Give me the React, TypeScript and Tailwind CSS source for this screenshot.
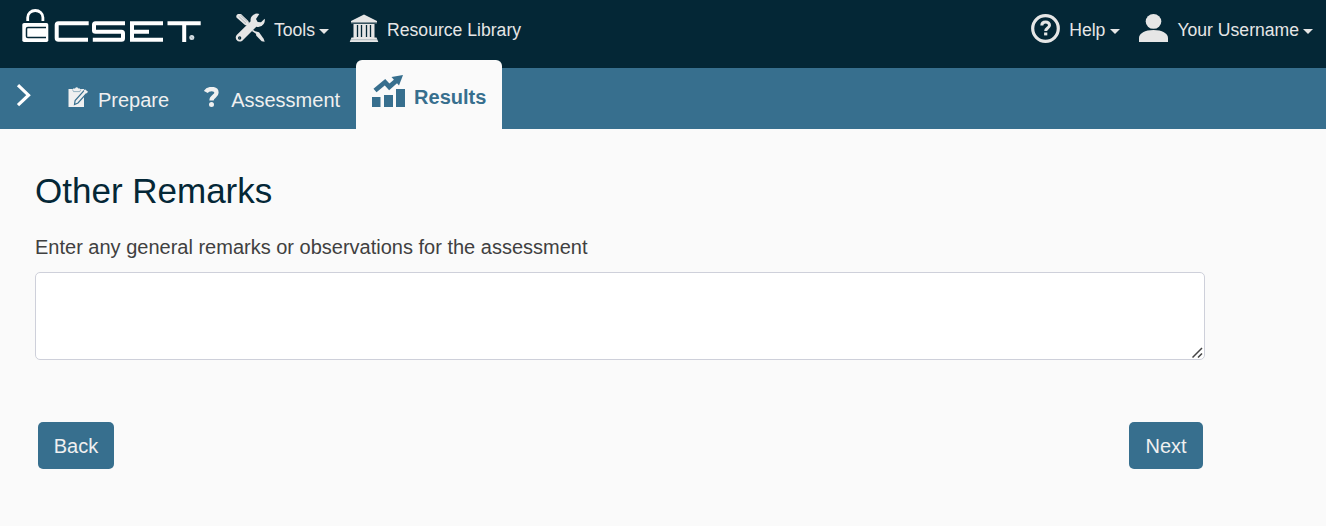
import React from "react";

function Logo() {
  return (
    <svg width="184" height="40" viewBox="20 5 184 40" className="shrink-0" fill="none">
      <path d="M27.700 21v-3.500a7.600 7 0 0 1 15.200 0V21" stroke="#fff" strokeWidth="2.800" />
      <rect x="22.300" y="23" width="26" height="19" rx="1.800" fill="#fff" />
      <path d="M46 27.500H27.800q-1.300 0-1.300 1.300V36.200q0 1.300 1.300 1.300H46" stroke="#042736" strokeWidth="1.500" />
      <path d="M88.700 23.200H58.500q-1.800 0-1.800 1.800V38q0 1.800 1.800 1.800H88" stroke="#fff" strokeWidth="4" />
      <path d="M125 23.200H95.500q-1.500 0-1.500 1.500V30.500q0 1.300 1.500 1.300H121.500q1.500 0 1.500 1.500V38.300q0 1.500-1.500 1.500H92.800" stroke="#fff" strokeWidth="4" />
      <path d="M163 23.200H132V39.800H163M132 31.800h17" stroke="#fff" strokeWidth="4" />
      <path d="M167.500 23.200H200.700M184.200 23v19" stroke="#fff" strokeWidth="4" />
      <circle cx="191.800" cy="37.500" r="2.500" fill="#d8e0e5" />
      <path d="M190.800 36.500l2 2" stroke="#718590" strokeWidth=".6" />
    </svg>
  );
}

function ToolsIcon() {
  return (
    <svg width="32" height="30" viewBox="30 39 96 90" className="shrink-0" fill="none">
      <path d="M39 42h9l22 21q4 6 0 11-5 4-10 1L35 53q-4-6 4-11z" fill="#e6e6e6" />
      <path d="M41 49l22 21M46 45l21 20" stroke="#6c7f89" strokeWidth="1.500" />
      <path d="M82 91l14 9" stroke="#e6e6e6" strokeWidth="5" />
      <path d="M91 94l11 3 14 19 3 9-9-1-16-17z" fill="#e6e6e6" />
      <path d="M103 42q-13-4-22 6-6 7-4 16L35 105q-5 7-1 14 7 9 17 4l43-43q15 3 22-8 5-7 3-16l-11 11-10-1-5-9z" fill="#e6e6e6" />
      <circle cx="44" cy="114" r="5" fill="#042736" />
      <circle cx="44" cy="114" r="1.200" fill="#e6e6e6" />
    </svg>
  );
}

function LibraryIcon() {
  return (
    <svg width="30" height="28" viewBox="0 0 30 28" className="shrink-0">
      <path d="M15 .5L28 7v1.500H2V7zM4.500 10h21v13.500h-21zM2.500 23.500h25l1.800 4.500H.7z" fill="#e6e6e6" />
      <path d="M2 9h26M2 25.700h26" stroke="#9aa7ad" strokeWidth=".7" />
      <path d="M8.500 11v12M12.500 11v12M17.500 11v12M21.500 11v12" stroke="#042736" strokeWidth="1.300" />
    </svg>
  );
}

function HelpIcon() {
  return (
    <svg width="30" height="29" viewBox="0 0 30 29" className="shrink-0" fill="none" stroke="#e6e6e6">
      <circle cx="14.500" cy="14.500" r="12.800" strokeWidth="3.200" />
      <path d="M10.800 11.400C10.800 8.800 12.500 7.900 14.700 7.900S18.500 9.300 18.500 11.200C18.500 14 14.700 14 14.700 17" strokeWidth="3" />
      <path d="M14.700 18.500v2.900" strokeWidth="3.200" />
    </svg>
  );
}

function UserIcon() {
  return (
    <svg width="29" height="28" viewBox="0 0 29 28" className="shrink-0" fill="#e6e6e6">
      <ellipse cx="14.500" cy="7.400" rx="7.800" ry="7.400" />
      <path d="M0 28v-4c0-4.500 6-8 14.500-8S29 19.500 29 24v4z" />
    </svg>
  );
}

function PrepareIcon() {
  return (
    <svg width="21" height="21" viewBox="0 0 21 21" className="shrink-0">
      <path d="M.5 2H16v18H.5z" fill="#f0f0f0" />
      <path d="M5 1.500h2Q8.500-1 10.500 1.500H12V4H5z" fill="#f0f0f0" />
      <path d="M4.500 2.500l1 2.100h6.300l1-2.100" fill="none" stroke="#6f98ae" strokeWidth=".7" />
      <path d="M16.500 3l3 2.400L10 16l-3.500 1.500.6-3.900z" fill="#f0f0f0" stroke="#376f8e" strokeWidth="1.200" />
      <path d="M17 2.300l3 2.400-1.400 1.700-3-2.400z" fill="#f0f0f0" />
    </svg>
  );
}

function QuestionIcon() {
  return (
    <svg width="16" height="21" viewBox="0 0 16 21" className="shrink-0" fill="none" stroke="#f0f0f0">
      <path d="M1.800 5C3 2.700 5 2 7.700 2c3.200 0 4.800 1.500 4.800 3.800 0 3.500-5 3.500-5 7.700" strokeWidth="4.300" />
      <circle cx="7.500" cy="17.600" r="2.500" fill="#f0f0f0" stroke="none" />
    </svg>
  );
}

function ResultsIcon() {
  return (
    <svg width="34" height="33" viewBox="0 0 34 33" className="shrink-0" fill="#376f8e">
      <path d="M0 22h8.500v10H0zM12 20h9v12h-9zM24 14h9v18h-9z" />
      <path d="M3 15.500L13 7.200l4.300 4.600 9-7.800" fill="none" stroke="#376f8e" strokeWidth="4.800" />
      <path d="M19.500 2L31 0l-4 10.500z" />
    </svg>
  );
}

function Caret() {
  return (
    <svg width="10" height="5" viewBox="0 0 10 5" className="mt-[6px] ml-[4px] shrink-0" fill="#e6e6e6">
      <path d="M0 0h10L5 5z" />
    </svg>
  );
}

export default function App() {
  return (
    <div className="h-[526px] w-[1326px] overflow-hidden bg-[#fafafa] font-['Liberation_Sans',Arial,sans-serif]">
      <header className="flex h-[68px] items-start bg-[#042736] pl-5 text-[17.6px] text-[#e6e6e6]">
        <div className="mt-[5px]"><Logo /></div>
        <button className="mt-[13px] ml-[31px] flex h-[30px] items-center">
          <ToolsIcon />
          <span className="mt-[4px] ml-[7px] leading-[26px]">Tools</span>
          <Caret />
        </button>
        <button className="mt-[13px] ml-5 flex h-[30px] items-center whitespace-nowrap">
          <LibraryIcon />
          <span className="mt-[4px] ml-2 leading-[26px]">Resource Library</span>
        </button>
        <div className="mt-[13px] mr-[13px] ml-auto flex h-[30px] items-center whitespace-nowrap">
          <button className="flex items-center">
            <HelpIcon />
            <span className="mt-[4px] mr-px ml-2 leading-[26px]">Help</span>
            <Caret />
          </button>
          <button className="ml-[19px] flex items-center">
            <UserIcon />
            <span className="mt-[4px] ml-[9px] leading-[26px]">Your Username</span>
            <Caret />
          </button>
        </div>
      </header>
      <nav className="flex h-[61px] items-end bg-[#376f8e] text-xl text-[#f0f0f0]">
        <button className="flex h-[61px] w-[68px] items-start pt-[15px] pl-4" aria-label="Expand">
          <svg width="16" height="25" viewBox="0 0 16 25" fill="none">
            <path d="M2 2.200l10.500 10L2 22.200" stroke="#fff" strokeWidth="3.200" />
          </svg>
        </button>
        <button className="flex h-[61px] items-start pt-[19px]">
          <PrepareIcon />
          <span className="ml-[9px] leading-[26px]">Prepare</span>
        </button>
        <button className="ml-[35px] flex h-[61px] items-start pt-[19px]">
          <QuestionIcon />
          <span className="ml-[11px] leading-[26px]">Assessment</span>
        </button>
        <button className="ml-4 flex h-[69px] w-[146px] items-start rounded-t-md bg-[#fafafa] pt-[15px] pl-4 font-bold text-[#376f8e]">
          <ResultsIcon />
          <span className="mt-[9px] ml-2 leading-[26px]">Results</span>
        </button>
      </nav>
      <main className="w-[1205px] pt-[40px] pl-[35px]">
        <h1 className="text-[35px] leading-[44px] text-[#042736]">Other Remarks</h1>
        <label htmlFor="remarks" className="mt-[19px] block text-[20px] leading-[30px] text-[#404040]">
          Enter any general remarks or observations for the assessment
        </label>
        <div className="relative mt-[10px] h-[88px] w-[1170px]">
          <textarea
            id="remarks"
            className="block h-full w-full resize-none rounded-[5px] border border-[#ced0da] bg-white"
          />
          <svg className="absolute right-[2px] bottom-[2px]" width="11" height="11" viewBox="0 0 11 11" stroke="#444" strokeWidth="1.500">
            <path d="M.5 10.500l9.500-9.500M6 10.500L10 6.500" />
          </svg>
        </div>
        <div className="mt-[62px] mr-[2px] ml-[3px] flex justify-between text-xl text-[#f0f0f0]">
          <button className="h-[47px] w-[76px] rounded-[5px] bg-[#376f8e]">Back</button>
          <button className="h-[47px] w-[74px] rounded-[5px] bg-[#376f8e]">Next</button>
        </div>
      </main>
    </div>
  );
}
